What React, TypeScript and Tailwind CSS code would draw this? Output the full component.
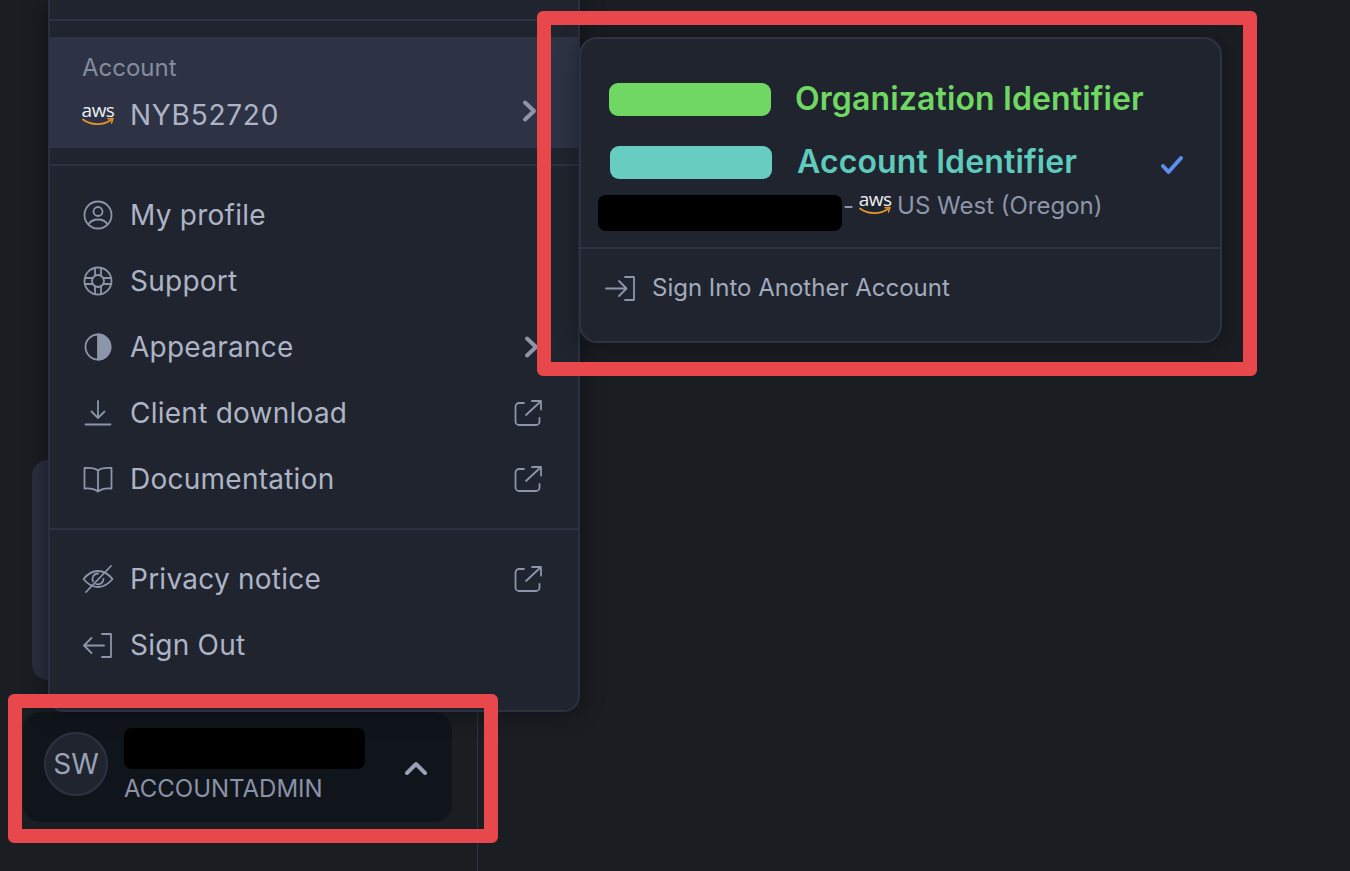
import type { ReactNode } from 'react';

const stroke = '#8d95aa';

function Icon({ children, size = 32 }: { children: ReactNode; size?: number }) {
  return (
    <svg width={size} height={size} viewBox="0 0 32 32" fill="none" stroke={stroke} strokeWidth="1.8" strokeLinecap="round" strokeLinejoin="round" className="shrink-0">
      {children}
    </svg>
  );
}

const ProfileIcon = () => (
  <Icon>
    <circle cx="16" cy="16" r="13.5" />
    <circle cx="16" cy="12.5" r="4.5" />
    <path d="M6.5 25.5c2-3.6 5.4-5 9.5-5s7.500 1.400 9.500 5" />
  </Icon>
);

const SupportIcon = () => (
  <Icon>
    <circle cx="16" cy="16" r="13.5" />
    <circle cx="16" cy="16" r="6" />
    <path d="M13 3v7.500M19 3v7.500M13 21.500V29M19 21.500V29M3 13h7.500M3 19h7.500M21.500 13H29M21.500 19H29" />
  </Icon>
);

const AppearanceIcon = () => (
  <Icon>
    <circle cx="16" cy="16" r="12.500" />
    <path d="M16 3.500a12.500 12.500 0 0 1 0 25z" fill={stroke} />
  </Icon>
);

const DownloadIcon = () => (
  <Icon>
    <path d="M16 4v17M9.500 14.500 16 21l6.500-6.500M3.500 27.500h25" />
  </Icon>
);

const BookIcon = () => (
  <Icon>
    <path d="M16 7.500C13 5 8 4.500 2.500 5v20.500c5.500-.5 9.500 0 13.500 3 4-3 8-3.500 13.500-3V5C24 4.500 19 5 16 7.500zM16 7.500V28.500" />
  </Icon>
);

const ExternalIcon = () => (
  <Icon size={32}>
    <path d="M11 5H6a3.500 3.500 0 0 0-3.500 3.500v15A3.500 3.500 0 0 0 6 27h17a3.500 3.500 0 0 0 3.500-3.500V20" />
    <path d="M13 17 28 3M19 3h9v8.500" />
  </Icon>
);

const EyeOffIcon = () => (
  <Icon>
    <path d="M1.500 16C6 10.500 10.500 8 16 8s10 2.500 14.500 8C26 21.500 21.500 24 16 24S6 21.500 1.500 16z" />
    <path d="M16 10.500a5.500 5.500 0 0 0-5 7.800M21.500 16a5.500 5.500 0 0 1-7.500 5" />
    <path d="M29 3 4 29" />
  </Icon>
);

const SignOutIcon = () => (
  <Icon>
    <path d="M20 5h9v23h-9M2 16.500h20M9.500 9 2 16.500 9.500 24" />
  </Icon>
);

const SignInIcon = () => (
  <Icon>
    <path d="M21 5h9v23h-9M2 16.500h20M15 9l7.500 7.500L15 24" />
  </Icon>
);

function AwsLogo() {
  return (
    <span className="inline-flex flex-col items-center shrink-0 w-[32px]">
      <span className="text-[19px] leading-[15px] tracking-[-0.5px] text-[#eef0f4] font-['Open_Sans',sans-serif]">aws</span>
      <svg width="32" height="10" viewBox="0 0 32 10" fill="none" className="-mt-[1px]">
        <path d="M1 2.500C9 8.500 21 8.500 29 3" stroke="#e8952b" strokeWidth="1.800" strokeLinecap="round" />
        <path d="M26 1.800 31 1.500 29.500 6" stroke="#e8952b" strokeWidth="1.400" strokeLinecap="round" strokeLinejoin="round" />
      </svg>
    </span>
  );
}

function Chevron() {
  return (
    <svg width="16" height="24" viewBox="0 0 16 24" fill="none" stroke="#8d95aa" strokeWidth="4" strokeLinecap="round" strokeLinejoin="round">
      <path d="M3 3.500 12 12l-9 8.500" />
    </svg>
  );
}

function MenuRow({ icon, label, external, chevron }: { icon: ReactNode; label: string; external?: boolean; chevron?: boolean }) {
  return (
    <div className="flex items-center h-[66px] pl-[32px] pr-[33px]">
      {icon}
      <span className="ml-[16px] flex-1 text-[28px] tracking-[0.25px] text-[#adb4c6]">{label}</span>
      {external && <span className="flex mt-[2px]"><ExternalIcon /></span>}
      {chevron && <span className="mr-[5px] flex"><Chevron /></span>}
    </div>
  );
}

export default function App() {
  return (
    <div className="relative flex w-[1350px] h-[871px] overflow-hidden bg-[#1a1d22] font-['Inter',sans-serif]">
      {/* sidebar */}
      <div className="relative w-[478px] h-full border-r border-[#2c3242] flex flex-col justify-end pl-[23px] pb-[49px]">
        <div className="flex items-center w-[429px] h-[110px] rounded-[18px] bg-[#10151c] pl-[21px] pr-[23px]">
          <div className="flex items-center justify-center w-[64px] h-[64px] rounded-full bg-[#1f242e] border-2 border-[#2c3242] text-[28px] text-[#9aa2b5] -mt-[6px]">SW</div>
          <div className="ml-[16px] flex-1 -mt-[1px]">
            <div className="w-[241px] h-[41px] rounded-[8px] bg-black" />
            <div className="mt-[4px] text-[24px] leading-[32px] text-[#8a92a7]">ACCOUNTADMIN</div>
          </div>
          <svg width="26" height="18" viewBox="0 0 26 18" fill="none" stroke="#97a0b4" strokeWidth="4" strokeLinecap="round" strokeLinejoin="round" className="mt-[2px]">
            <path d="M4 14 13 5l9 9" />
          </svg>
        </div>
      </div>

      {/* card peeking out behind the menu */}
      <div className="absolute left-[32px] top-[460px] w-[40px] h-[220px] rounded-[16px] bg-[#2a2f3f]" />

      {/* user menu */}
      <div className="absolute left-[48px] top-0 w-[532px] h-[712px] rounded-b-[16px] bg-[#1f242e] border-x-2 border-b-2 border-[#2a3040] shadow-[0_0_24px_rgba(0,0,0,0.45)]">
        <div className="mt-[19px] border-t-2 border-[#2c3242]" />
        <div className="mt-[16px] h-[111px] bg-[#2d3344] pl-[32px] pr-[36px] pt-[16px]">
          <div className="text-[24px] leading-[30px] text-[#848c9f]">Account</div>
          <div className="flex items-center mt-[7px] h-[50px]">
            <AwsLogo />
            <span className="ml-[16px] flex-1 text-[28px] tracking-[0.75px] text-[#adb4c6]">NYB52720</span>
            <span className="mr-[4px] -mt-[8px] flex"><Chevron /></span>
          </div>
        </div>
        <div className="mt-[16px] border-t-2 border-[#2c3242]" />
        <div className="pt-[16px] pb-[16px]">
          <MenuRow icon={<ProfileIcon />} label="My profile" />
          <MenuRow icon={<SupportIcon />} label="Support" />
          <MenuRow icon={<AppearanceIcon />} label="Appearance" chevron />
          <MenuRow icon={<DownloadIcon />} label="Client download" external />
          <MenuRow icon={<BookIcon />} label="Documentation" external />
        </div>
        <div className="border-t-2 border-[#2c3242]" />
        <div className="pt-[16px]">
          <MenuRow icon={<EyeOffIcon />} label="Privacy notice" external />
          <MenuRow icon={<SignOutIcon />} label="Sign Out" />
        </div>
      </div>

      {/* account switcher */}
      <div className="absolute left-[579px] top-[37px] w-[643px] h-[306px] rounded-[18px] bg-[#1f242e] border-2 border-[#2c3242] shadow-[0_4px_24px_rgba(0,0,0,0.35)]">
        <div className="h-[208px] pt-[42px]">
          <div className="flex items-center pl-[28px] h-[36px]">
            <div className="w-[162px] h-[33px] rounded-[9px] bg-[#70d862]" />
            <span className="ml-[24px] text-[32px] tracking-[0.13px] font-semibold text-[#70d862]">Organization Identifier</span>
          </div>
          <div className="flex items-center pl-[29px] pr-[36px] h-[36px] mt-[27px]">
            <div className="w-[162px] h-[33px] rounded-[9px] bg-[#66cdc0]" />
            <span className="ml-[25px] flex-1 text-[32px] tracking-[0.13px] font-semibold text-[#5fcbbd]">Account Identifier</span>
            <svg width="24" height="20" viewBox="0 0 24 20" fill="none" stroke="#5f8ef2" strokeWidth="4" strokeLinecap="round" strokeLinejoin="round" className="mt-[5px]">
              <path d="M3 11l5.500 6L21 3" />
            </svg>
          </div>
          <div className="flex items-start pl-[17px] mt-[15px]">
            <div className="w-[244px] h-[36px] rounded-[8px] bg-black" />
            <span className="ml-[1px] text-[24px] leading-[22px] text-[#8d95aa]">-</span>
            <span className="ml-[5px] -mt-[3px] flex"><AwsLogo /></span>
            <span className="ml-[6px] text-[24px] leading-[22px] text-[#8d95aa]">US West (Oregon)</span>
          </div>
        </div>
        <div className="border-t-2 border-[#2c3242]" />
        <div className="flex items-center pl-[23px] pt-[20px]">
          <SignInIcon />
          <span className="ml-[16px] text-[24px] leading-[38px] text-[#a3abbd]">Sign Into Another Account</span>
        </div>
      </div>

      {/* annotation boxes */}
      <div className="absolute left-[537px] top-[11px] w-[720px] h-[365px] rounded-[6px] border-[14px] border-[#e8474c]" />
      <div className="absolute left-[8px] top-[694px] w-[490px] h-[149px] rounded-[6px] border-[14px] border-[#e8474c]" />
    </div>
  );
}
